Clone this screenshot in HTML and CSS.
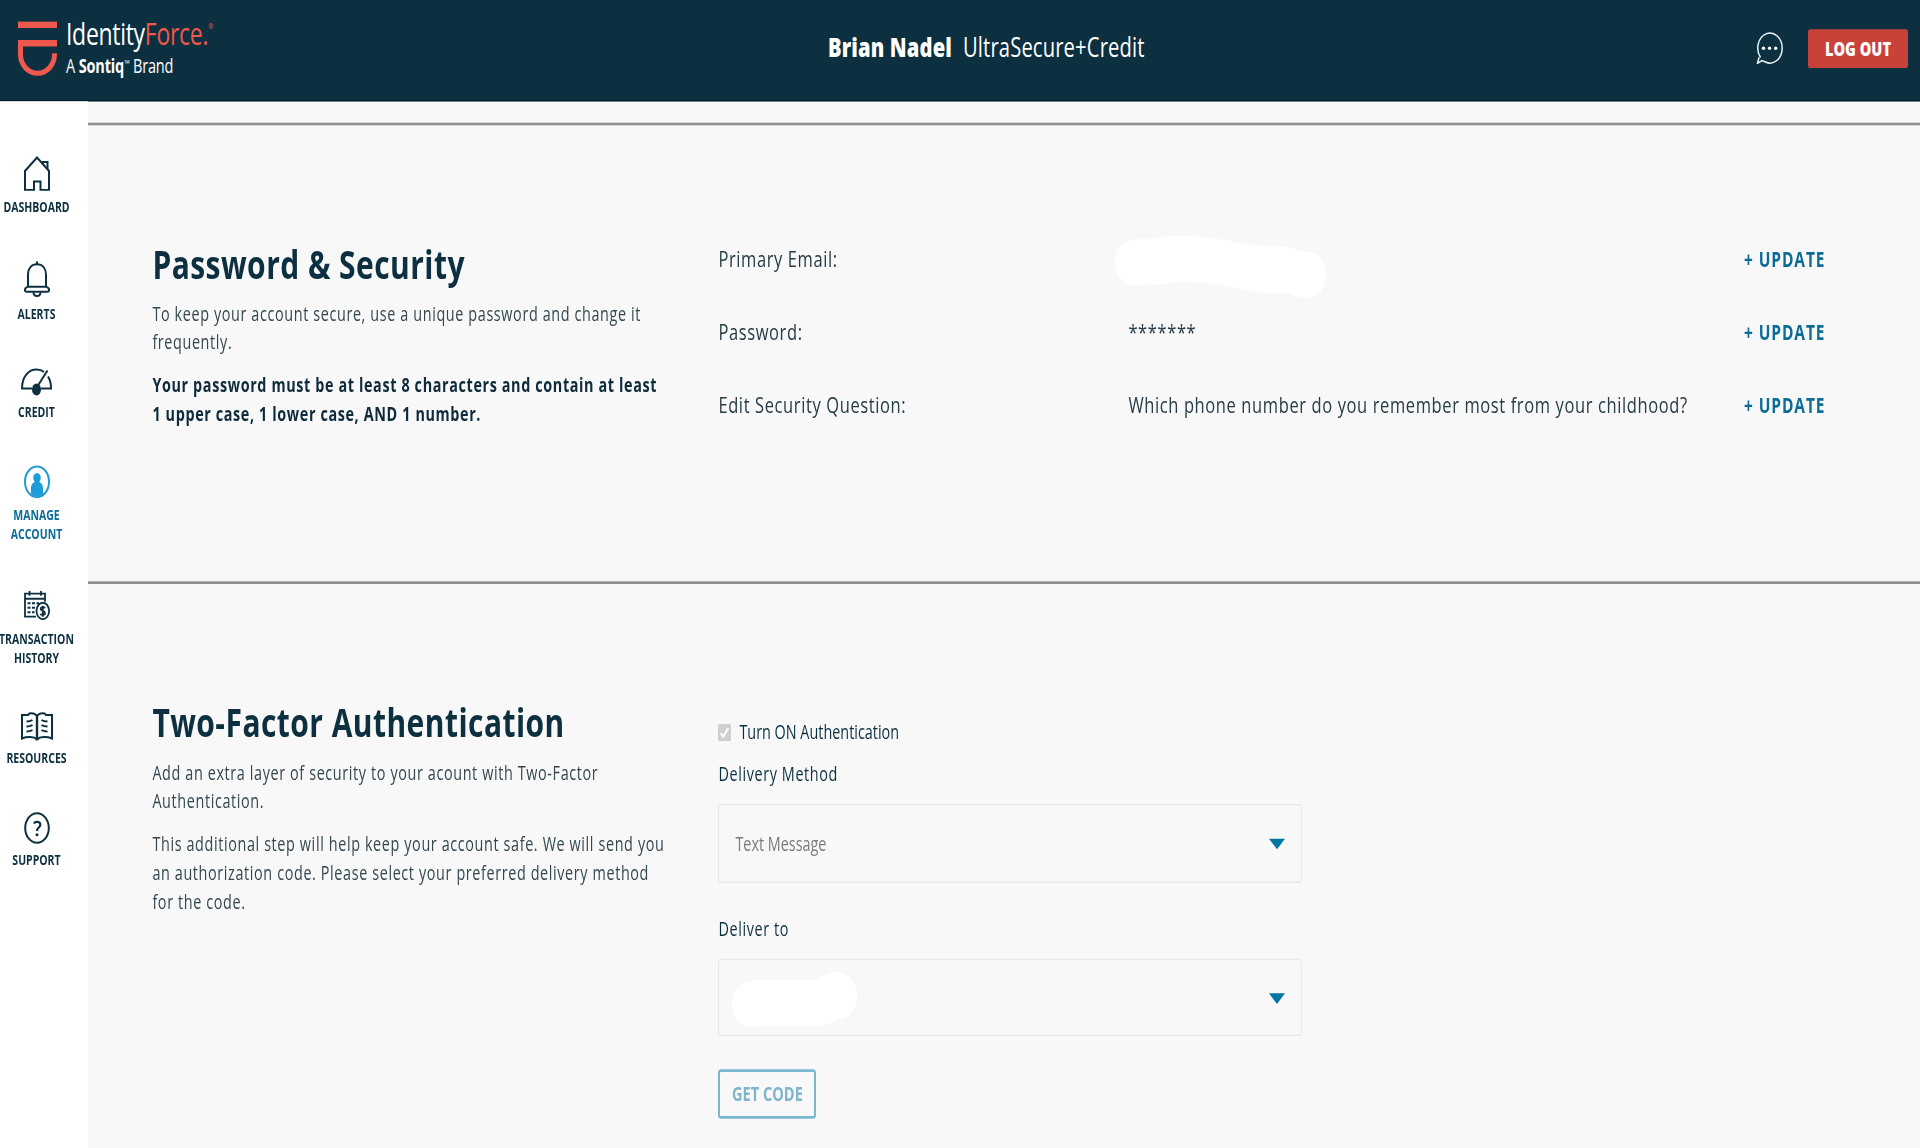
FILE: index.html
```
<!DOCTYPE html>
<html lang="en">
<head>
  <meta charset="UTF-8">
  <meta name="viewport" content="width=device-width, initial-scale=1.0">
  <title>IdentityForce - Manage Account</title>
  <link rel="stylesheet" href="styles.css">
</head>
<body>
  <div class="page">
    <header class="header">
      <a class="logo">
        <svg class="logo-mark" viewBox="0 0 40 56" preserveAspectRatio="none" fill="none" stroke="#f0574d">
          <path d="M0 3.5H39M0 22H39" stroke-width="6.5"/>
          <path d="M2.5 22V33A17 19 0 0 0 36.5 33V32" stroke-width="5"/>
        </svg>
        <div class="logo-text">
          <div class="logo-name">Identity<span>Force.<sup>®</sup></span></div>
          <div class="logo-brand">A <b>Sontiq</b><sup>™</sup> Brand</div>
        </div>
      </a>
      <div class="member"><b>Brian Nadel</b><span>UltraSecure+Credit</span></div>
      <div class="header-actions">
        <svg class="chat" viewBox="0 0 27 32" preserveAspectRatio="none" fill="none" stroke="#e8f3f8" stroke-width="1.5">
          <path d="M4.5 25.5A12.2 15 0 1 1 9.5 30L6 28.5L1.5 31.3L3 25.5"/>
          <g fill="#fff" stroke="none"><circle cx="7.5" cy="16.3" r="1.7"/><circle cx="13.6" cy="16.3" r="1.7"/><circle cx="19.7" cy="16.3" r="1.7"/></g>
        </svg>
        <button class="logout">LOG OUT</button>
      </div>
    </header>

    <div class="layout">
      <!-- Left navigation -->
      <nav class="sidebar">
        <a class="nav-item">
          <svg class="icon-home" viewBox="0 0 26 35" preserveAspectRatio="none" fill="none" stroke="#0d3040" stroke-width="2">
            <path d="M1 34V15L13 1.5L25 15V34H16.5V25.5H10V34Z"/>
            <path d="M17.5 6H23.5V13"/><path d="M18.5 6V8"/>
          </svg>
          <span>DASHBOARD</span>
        </a>
        <a class="nav-item">
          <svg class="icon-bell" viewBox="0 0 26 36" preserveAspectRatio="none" fill="none" stroke="#0d3040" stroke-width="2">
            <path d="M4 25V13.5C4 7 7.5 3 13 3S22 7 22 13.5V25"/>
            <path d="M13 0V3"/>
            <path d="M3.5 25.5H22.5C26 27 26 30.5 22.5 30.5H3.5C0 30.5 0 27 3.5 25.5Z"/>
            <path d="M9.5 31C9.5 36 16.5 36 16.5 31"/>
          </svg>
          <span>ALERTS</span>
        </a>
        <a class="nav-item">
          <svg class="icon-gauge" viewBox="0 0 31 28" preserveAspectRatio="none" fill="none" stroke="#0d3040" stroke-width="2">
            <path d="M11 20.5H1C1 8 8 1.5 15.5 1.5C18.5 1.5 21 2.3 23 4"/>
            <path d="M27 8.5C29 11.5 30 15.5 30 20.5H20"/>
            <path d="M16 19L26.5 2.5"/>
            <ellipse cx="15.5" cy="21.5" rx="4.5" ry="6" fill="#0d3040" stroke="none"/>
          </svg>
          <span>CREDIT</span>
        </a>
        <a class="nav-item active">
          <svg class="icon-user" viewBox="0 0 26 33" preserveAspectRatio="none" fill="#1e9cd7">
            <ellipse cx="13" cy="16.5" rx="12" ry="15.4" fill="none" stroke="#1e9cd7" stroke-width="2"/>
            <ellipse cx="13" cy="12.5" rx="3.7" ry="4.5"/>
            <path d="M7 29V23C7 18.5 9.5 17.5 11.5 16H14.5C16.5 17.5 19 18.5 19 23V29C15.5 31.5 10.5 31.5 7 29Z"/>
          </svg>
          <span>MANAGE<br>ACCOUNT</span>
        </a>
        <a class="nav-item transactions">
          <svg class="icon-history" viewBox="0 0 26 30" preserveAspectRatio="none" fill="none" stroke="#0d3040" stroke-width="1.8">
            <path d="M12 26H1V3H21V11"/><path d="M1 8H21" stroke-width="2"/>
            <path d="M5.5 0V5M17 0V5"/>
            <path d="M3.5 12.5H6.5M8 12.5H11M12.5 12.5H15M3.5 17H6.5M8 17H11M3.5 21.5H6.5M8 21.5H10.5" stroke-width="2"/>
            <ellipse cx="18.8" cy="20.3" rx="6.3" ry="8.2"/>
            <path d="M21 17.5C20.5 16 16.7 16 16.7 18.3C16.7 20.7 21 19.8 21 22.3C21 24.7 17 24.7 16.5 23M18.8 15V26"/>
          </svg>
          <span>TRANSACTION<br>HISTORY</span>
        </a>
        <a class="nav-item">
          <svg class="icon-book" viewBox="0 0 32 29" preserveAspectRatio="none" fill="none" stroke="#0d3040" stroke-width="2">
            <path d="M16 4C14 1.5 11 1 8.5 1.5L7 3H1V26.5C6 24.5 13 24.5 16 27.5C19 24.5 26 24.5 31 26.5V3H25L23.5 1.5C21 1 18 1.5 16 4Z"/>
            <path d="M16 4V28" stroke-width="2.4"/>
            <path d="M5.5 9.5C8 9.5 10 9 11.5 8M5.5 14.5C8 14.5 10 14 11.5 13M5.5 19.5C8 19.5 10 19 11.5 18M20.5 8C22 9 24 9.5 26.5 9.5M20.5 13C22 14 24 14.5 26.5 14.5M20.5 18C22 19 24 19.5 26.5 19.5"/>
          </svg>
          <span>RESOURCES</span>
        </a>
        <a class="nav-item">
          <svg class="icon-help" viewBox="0 0 26 32" preserveAspectRatio="none" fill="none" stroke="#0d3040">
            <ellipse cx="13" cy="16" rx="11.8" ry="14.8" stroke-width="2"/>
            <path d="M9.8 11.5C11.5 9 16.3 9.3 16.3 12.8C16.3 15.6 13 15.5 13 19" stroke-width="2.2"/>
            <circle cx="13" cy="22.7" r="1.5" fill="#0d3040" stroke="none"/>
          </svg>
          <span>SUPPORT</span>
        </a>
      </nav>

      <main class="content">
        <section class="panel">
          <div class="intro">
            <h2>Password &amp; Security</h2>
            <p>To keep your account secure, use a unique password and change it<br>frequently.</p>
            <p class="strong">Your password must be at least 8 characters and contain at least<br>1 upper case, 1 lower case, AND 1 number.</p>
          </div>
          <div class="settings">
            <div class="row">
              <div class="label">Primary Email:</div>
              <div class="value">
                <svg class="hidden-email" viewBox="0 0 212 62" preserveAspectRatio="none" fill="#fff">
                  <path d="M17 4C24 3 34 4 40 2C56-1 82 0 94 2C110 3 121 7 132 8C145 11 160 10 172 11C180 12 184 16 192 16C205 16 211 26 211 38C211 53 203 62 193 62C184 62 180 60 176 57C167 56 150 58 141 56C130 54 118 51 106 49C92 46 69 45 56 47C46 49 38 48 28 49C21 50 17 51 13 48C5 44 0 36 0 25C0 13 7 5 17 4Z"/>
                </svg>
              </div>
              <a class="update">+ UPDATE</a>
            </div>
            <div class="row">
              <div class="label">Password:</div>
              <div class="value">*******</div>
              <a class="update">+ UPDATE</a>
            </div>
            <div class="row">
              <div class="label">Edit Security Question:</div>
              <div class="value">Which phone number do you remember most from your childhood?</div>
              <a class="update">+ UPDATE</a>
            </div>
          </div>
        </section>

        <section class="panel">
          <div class="intro">
            <h2>Two-Factor Authentication</h2>
            <p>Add an extra layer of security to your acount with Two-Factor<br>Authentication.</p>
            <p>This additional step will help keep your account safe. We will send you<br>an authorization code. Please select your preferred delivery method<br>for the code.</p>
          </div>
          <div class="auth-form">
            <div class="check">
              <svg class="checkbox" viewBox="0 0 13 17" preserveAspectRatio="none">
                <rect width="13" height="17" rx="2" fill="#cfcfcf"/>
                <path d="M2.7 9L5.2 12.5L10.3 4" fill="none" stroke="#fff" stroke-width="2"/>
              </svg>
              <span>Turn ON Authentication</span>
            </div>
            <div class="field-label">Delivery Method</div>
            <div class="select">
              <span>Text Message</span>
              <i class="arrow"></i>
            </div>
            <div class="field-label deliver">Deliver to</div>
            <div class="select">
              <svg class="hidden-phone" viewBox="0 0 125 56" preserveAspectRatio="none" fill="#fff">
                <path d="M19 10C20 8 25 8 30 8H86C90 3 95 3 98 1C104-1 110 0 114 3C121 7 125 14 125 23C125 34 121 41 114 45C110 47 107 46 104 48C99 53 95 53 87 54H30C25 54 20 56 15 55C5 52 0 43 0 32C0 20 7 11 19 10Z"/>
              </svg>
              <i class="arrow"></i>
            </div>
            <button class="get-code">GET CODE</button>
          </div>
        </section>
      </main>
    </div>
  </div>
</body>
</html>
```
FILE: styles.css
```
* {
  box-sizing: border-box;
}
body {
  margin: 0;
  height: 1148px;
  overflow: hidden;
  background: #f8f8f8;
  font-family: "Open Sans", sans-serif;
  color: #0d3040;
}
/* the whole page is drawn a third taller than wide */
.page {
  width: 1920px;
  height: 861px;
  overflow: hidden;
  transform: scaleY(1.33333);
  transform-origin: 0 0;
}
.header {
  display: grid;
  grid-template-columns: 828px 1fr auto;
  align-items: center;
  height: 75.5px;
  padding-bottom: 2px;
  border-bottom: 1px solid #061f2b;
  background: #0d3040;
  color: #fff;
}
.logo {
  display: flex;
  gap: 8px;
  padding: 1px 0 0 18px;
}
.logo-mark {
  width: 40px;
  height: 42px;
  margin-top: 3px;
}
.logo-text {
  white-space: nowrap;
}
.logo-name {
  margin-top: -1px;
  font-size: 23px;
  line-height: 26px;
  letter-spacing: -0.3px;
}
.logo-name span {
  color: #f0574d;
}
.logo-name sup {
  font-size: 6px;
  vertical-align: 12px;
  line-height: 0;
}
.logo-brand {
  font-size: 14.5px;
  line-height: 20px;
  margin-top: 2px;
  letter-spacing: -0.15px;
}
.logo-brand sup {
  font-size: 7px;
  vertical-align: 5px;
  line-height: 0;
}
.member {
  display: flex;
  gap: 11px;
  padding-bottom: 2px;
  font-size: 20.2px;
  line-height: 26px;
}
.member b {
  font-weight: 800;
  letter-spacing: 0.14px;
}
.member span {
  letter-spacing: 0.15px;
}
.header-actions {
  display: flex;
  align-items: center;
  gap: 25px;
  padding-right: 12px;
}
.chat {
  width: 27px;
  height: 24px;
}
.logout {
  width: 100px;
  height: 29.5px;
  padding: 0;
  border: none;
  border-radius: 2px;
  background: #c9423a;
  color: #fff;
  font: 800 14.6px "Open Sans", sans-serif;
}
.layout {
  display: flex;
  height: 785.5px;
}
.sidebar {
  width: 88px;
  padding: 41px 15px 0 0;
  background: #fff;
}
.nav-item {
  display: flex;
  flex-direction: column;
  align-items: center;
  gap: 6px;
  margin-bottom: 33.4px;
  font-size: 10.5px;
  font-weight: 700;
  line-height: 13.8px;
  text-align: center;
  white-space: nowrap;
}
.nav-item.active {
  margin-top: -1px;
  margin-bottom: 35.3px;
  color: #0c6c98;
}
.nav-item.transactions {
  gap: 7.5px;
}
.icon-home {
  width: 26px;
  height: 26.25px;
}
.icon-bell {
  width: 26px;
  height: 27px;
}
.icon-gauge {
  width: 31px;
  height: 21px;
}
.icon-user {
  width: 26px;
  height: 24.75px;
}
.icon-history {
  width: 26px;
  height: 22.5px;
}
.icon-book {
  width: 32px;
  height: 21.75px;
}
.icon-help {
  width: 26px;
  height: 24px;
}
.content {
  flex: 1;
  padding-top: 16.5px;
}
.panel {
  display: grid;
  grid-template-columns: 566px 1fr;
  height: 344px;
  padding: 82px 94px 0 64.4px;
  border-top: 2px solid #8d8f90;
}
.panel:last-child {
  height: 425px;
}
h2 {
  margin: 0 0 4.5px;
  font-size: 30px;
  font-weight: 700;
  line-height: 44px;
  letter-spacing: 0.45px;
}
p {
  margin: 0 0 10.8px;
  font-size: 14.4px;
  line-height: 21.6px;
  letter-spacing: 0.62px;
  color: #34474f;
  white-space: nowrap;
}
p.strong {
  font-weight: 700;
  color: #0d2b3a;
}
.settings {
  padding-top: 5.3px;
}
.row {
  display: grid;
  grid-template-columns: 410px 1fr 81px;
  height: 55px;
  font-size: 16.5px;
  line-height: 26px;
  letter-spacing: 0.61px;
  color: #263c46;
  white-space: nowrap;
}
.hidden-email {
  display: block;
  width: 212px;
  height: 46.5px;
  margin: -4.8px 0 0 -13px;
}
.update {
  margin-left: -1px;
  color: #0c6c98;
  font-size: 15.5px;
  font-weight: 700;
  letter-spacing: 0.9px;
}
.auth-form {
  padding-top: 18px;
}
.check {
  display: flex;
  align-items: center;
  gap: 8px;
  font-size: 14.4px;
  line-height: 22px;
}
.checkbox {
  width: 13px;
  height: 13px;
}
.field-label {
  margin-top: 10px;
  font-size: 14.4px;
  line-height: 22px;
  letter-spacing: 0.62px;
}
.field-label.deliver {
  margin-top: 24.3px;
}
.select {
  display: flex;
  align-items: center;
  justify-content: space-between;
  width: 584px;
  height: 58.5px;
  margin-top: 11px;
  padding: 0 16px;
  border: 1px solid #e8e8e8;
  border-radius: 3px;
  font-size: 14.4px;
  color: #7b7b7b;
}
.arrow {
  margin-top: 1.5px;
  border: 8px solid transparent;
  border-top: 8px solid #0076a3;
  border-bottom: 0;
}
.hidden-phone {
  width: 125px;
  height: 42px;
  margin: 4.5px 0 0 -3px;
}
.get-code {
  width: 98px;
  height: 37.5px;
  margin-top: 24.5px;
  padding: 0 0 1px;
  border: 2px solid #7ab8d2;
  border-radius: 3px;
  background: transparent;
  color: #7fb5cc;
  font: 700 14.6px "Open Sans", sans-serif;
}
```
